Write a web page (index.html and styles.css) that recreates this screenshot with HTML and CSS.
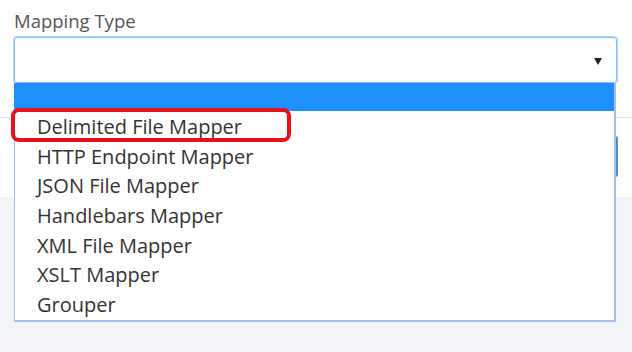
FILE: index.html
```html
<!DOCTYPE html>
<html>
<head>
	<meta charset="utf-8">
	<meta name="viewport" content="width=device-width, initial-scale=1">
	<title>Mapping Type</title>
	<link rel="stylesheet" href="styles.css">
</head>
<body>
	<div class="panel">
		<div class="field">
			<label class="label">Mapping Type</label>
			<div class="select">
				<span class="arrow"></span>
			</div>
		</div>
		<div class="divider"></div>
		<div class="actions">
			<div class="btn"></div>
		</div>
	</div>
	<div class="footer"></div>

	<div class="dropdown">
		<div class="option selected"></div>
		<div class="option">Delimited File Mapper</div>
		<div class="option">HTTP Endpoint Mapper</div>
		<div class="option">JSON File Mapper</div>
		<div class="option">Handlebars Mapper</div>
		<div class="option">XML File Mapper</div>
		<div class="option">XSLT Mapper</div>
		<div class="option">Grouper</div>
	</div>
	<div class="mark"></div>
</body>
</html>
```

FILE: styles.css
```css
body{
	margin: 0;
	background: #f3f4f8;
	font-family: "Open Sans", "Noto Sans", sans-serif;
	position: relative;
	height: 352px;
	overflow: hidden;
}
.panel{
	background: #fff;
	height: 197px;
}
.field{
	padding: 8px 15px 0 14px;
}
.label{
	display: block;
	font-size: 18.5px;
	color: #555;
	line-height: 26px;
	height: 29px;
}
.select{
	height: 44px;
	border: 1px solid #80bdff;
	border-radius: 3px;
	box-shadow: 0 0 0 1px #b6d7fb;
	display: flex;
	align-items: center;
	justify-content: flex-end;
	padding-right: 14px;
}
.arrow{
	width: 0;
	height: 0;
	border-left: 4px solid transparent;
	border-right: 4px solid transparent;
	border-top: 7px solid #222;
	margin-top: 2px;
}
.divider{
	margin-top: 34px;
	height: 1px;
	background: #e3e4e8;
}
.actions{
	display: flex;
	justify-content: flex-end;
	padding: 18px 14px 0 0;
}
.btn{
	width: 20px;
	height: 41px;
	background: #4a8fd0;
	border-radius: 3px;
}
.dropdown{
	position: absolute;
	left: 14px;
	top: 83px;
	width: 599px;
	background: #fff;
	border: 1px solid #a6bfe8;
	border-top: none;
	border-right-width: 2px;
	border-bottom-width: 2px;
}
.option{
	height: 29.7px;
	line-height: 29.7px;
	padding-left: 22px;
	font-size: 20px;
	color: #333;
	white-space: nowrap;
}
.option.selected{
	height: 28px;
	background: #1e90ff;
	margin-left: -1px;
	margin-bottom: 1px;
}
.mark{
	position: absolute;
	left: 11px;
	top: 108px;
	width: 272px;
	height: 26px;
	border: 4px solid #e8101c;
	border-radius: 8px;
}
```
